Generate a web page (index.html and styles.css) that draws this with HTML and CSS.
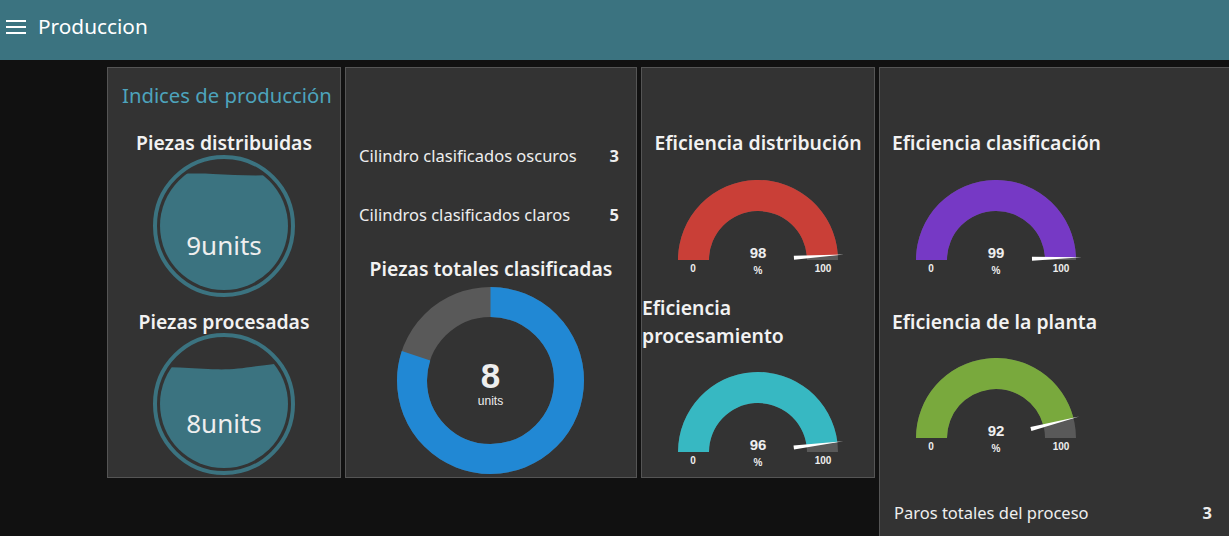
FILE: index.html
```html
<!DOCTYPE html>
<html lang="es">
<head>
<meta charset="utf-8">
<title>Produccion</title>
<link rel="stylesheet" href="styles.css">
</head>
<body>
<header class="toolbar">
  <svg class="menu-icon" width="20" height="14" viewBox="0 0 20 14"><rect x="0" y="0" width="20" height="2" fill="#fff"/><rect x="0" y="6" width="20" height="2" fill="#fff"/><rect x="0" y="12" width="20" height="2" fill="#fff"/></svg>
  <span class="toolbar-title">Produccion</span>
</header>
<main class="board">
  <section class="card card-a">
    <div class="group-title">Indices de producción</div>
    <div class="w-label first">Piezas distribuidas</div>
    <svg class="liquid" width="142" height="142" viewBox="0 0 142 142">
      <defs><clipPath id="c1"><circle cx="71" cy="71" r="64"/></clipPath></defs>
      <circle cx="71" cy="71" r="69" fill="none" stroke="#3b7380" stroke-width="4"/>
      <g clip-path="url(#c1)">
        <path d="M0 21 C20 19 40 18 60 19 S100 21 120 20 S140 18 142 18 L142 142 L0 142 Z" fill="#3b7380"/>
      </g>
      <text x="71" y="100" class="liquid-text">9units</text>
    </svg>
    <div class="w-label second">Piezas procesadas</div>
    <svg class="liquid" width="142" height="142" viewBox="0 0 142 142">
      <defs><clipPath id="c2"><circle cx="71" cy="71" r="64"/></clipPath></defs>
      <circle cx="71" cy="71" r="69" fill="none" stroke="#3b7380" stroke-width="4"/>
      <g clip-path="url(#c2)">
        <path d="M0 35 C20 33 35 35 55 36 S85 36 105 33 S135 30 142 31 L142 142 L0 142 Z" fill="#3b7380"/>
      </g>
      <text x="71" y="100" class="liquid-text">8units</text>
    </svg>
  </section>

  <section class="card card-b">
    <div class="text-row r1"><span>Cilindro clasificados oscuros</span><b>3</b></div>
    <div class="text-row r2"><span>Cilindros clasificados claros</span><b>5</b></div>
    <div class="w-label donut-label">Piezas totales clasificadas</div>
    <svg class="donut" width="187" height="187" viewBox="0 0 187 187">
      <circle cx="93.5" cy="93.5" r="78.5" fill="none" stroke="#595959" stroke-width="30"/>
      <circle cx="93.5" cy="93.5" r="78.5" fill="none" stroke="#2188d4" stroke-width="30" stroke-dasharray="394.6 493.3" transform="rotate(-90 93.5 93.5)"/>
      <text x="93.5" y="101" class="donut-num">8</text>
      <text x="93.5" y="118" class="donut-unit">units</text>
    </svg>
  </section>

  <section class="card card-c">
    <div class="w-label g-title1">Eficiencia distribución</div>
    <svg class="gauge" width="200" height="100" viewBox="0 0 200 100">
      <path d="M20 80 A80 80 0 0 1 180 80 L149 80 A49 49 0 0 0 51 80 Z" fill="#595959"/>
      <path d="M20 80 A80 80 0 0 1 179.842 74.977 L148.903 76.923 A49 49 0 0 0 51 80 Z" fill="#c93f37"/>
      <polygon points="136.05,79.74 135.80,75.74 185.83,74.60" fill="#fff"/>
      <text x="100" y="78" class="g-val">98</text>
      <text x="100" y="94" class="g-unit">%</text>
      <text x="35" y="92" class="g-lim">0</text>
      <text x="165" y="92" class="g-lim">100</text>
    </svg>
    <div class="w-label g-title-wrap">Eficiencia procesamiento</div>
    <svg class="gauge g2" width="200" height="100" viewBox="0 0 200 100">
      <path d="M20 80 A80 80 0 0 1 180 80 L149 80 A49 49 0 0 0 51 80 Z" fill="#595959"/>
      <path d="M20 80 A80 80 0 0 1 179.369 69.973 L148.614 73.859 A49 49 0 0 0 51 80 Z" fill="#37b8c2"/>
      <polygon points="135.97,77.47 135.47,73.50 185.32,69.22" fill="#fff"/>
      <text x="100" y="78" class="g-val">96</text>
      <text x="100" y="94" class="g-unit">%</text>
      <text x="35" y="92" class="g-lim">0</text>
      <text x="165" y="92" class="g-lim">100</text>
    </svg>
  </section>

  <section class="card card-d">
    <div class="w-label left g-title1">Eficiencia clasificación</div>
    <svg class="gauge left-g" width="200" height="100" viewBox="0 0 200 100">
      <path d="M20 80 A80 80 0 0 1 180 80 L149 80 A49 49 0 0 0 51 80 Z" fill="#595959"/>
      <path d="M20 80 A80 80 0 0 1 179.961 77.487 L148.976 78.461 A49 49 0 0 0 51 80 Z" fill="#7639c5"/>
      <polygon points="136.05,80.87 135.92,76.87 185.96,77.30" fill="#fff"/>
      <text x="100" y="78" class="g-val">99</text>
      <text x="100" y="94" class="g-unit">%</text>
      <text x="35" y="92" class="g-lim">0</text>
      <text x="165" y="92" class="g-lim">100</text>
    </svg>
    <div class="w-label left g-title3">Eficiencia de la planta</div>
    <svg class="gauge left-g g4" width="200" height="100" viewBox="0 0 200 100">
      <path d="M20 80 A80 80 0 0 1 180 80 L149 80 A49 49 0 0 0 51 80 Z" fill="#595959"/>
      <path d="M20 80 A80 80 0 0 1 177.487 60.105 L147.461 67.814 A49 49 0 0 0 51 80 Z" fill="#79a93d"/>
      <polygon points="135.37,72.98 134.37,69.11 183.30,58.61" fill="#fff"/>
      <text x="100" y="78" class="g-val">92</text>
      <text x="100" y="94" class="g-unit">%</text>
      <text x="35" y="92" class="g-lim">0</text>
      <text x="165" y="92" class="g-lim">100</text>
    </svg>
    <div class="text-row r-last"><span>Paros totales del proceso</span><b>3</b></div>
  </section>
</main>
</body>
</html>
```

FILE: styles.css
```css
html, body {
  margin: 0;
  padding: 0;
}
body {
  background: #111111;
  color: #eeeeee;
  font-family: "Noto Sans", "Open Sans", sans-serif;
  width: 1229px;
  height: 536px;
  overflow: hidden;
}
.toolbar {
  height: 60px;
  background: #3b7380;
  display: flex;
  align-items: center;
  padding-left: 6px;
  box-sizing: border-box;
}
.menu-icon {
  display: block;
  margin-right: 12px;
  margin-top: -6px;
}
.toolbar-title {
  font-size: 20.8px;
  color: #fff;
  margin-top: -8px;
}
.board {
  display: flex;
  align-items: flex-start;
  gap: 4px;
  padding: 7px 0 0 107px;
}
.card {
  background: #333333;
  border: 1px solid #555555;
  box-sizing: border-box;
  display: flex;
  flex-direction: column;
  flex-shrink: 0;
}
.card-a { width: 234px; height: 411px; align-items: center; }
.card-b { width: 292px; height: 411px; }
.card-c { width: 234px; height: 411px; }
.card-d { width: 352px; height: 490px; }

.group-title {
  align-self: stretch;
  margin-top: 10px;
  padding-left: 14px;
  line-height: 34px;
  font-size: 20.3px;
  color: #4da3bc;
  white-space: nowrap;
}
.w-label {
  font-size: 19.4px;
  font-weight: 600;
  text-align: center;
  color: #f2f2f2;
  white-space: nowrap;
}
.w-label.first { line-height: 24px; margin-top: 19px; }
.w-label.second { line-height: 22px; margin-top: 14px; }
.liquid { display: block; }
.liquid-text {
  font-size: 26px;
  fill: #eeeeee;
  text-anchor: middle;
  font-family: "Noto Sans", sans-serif;
}

.text-row {
  display: flex;
  justify-content: space-between;
  align-items: center;
  height: 36px;
  padding: 0 17px 0 13px;
  font-size: 16.5px;
  color: #eeeeee;
}
.text-row b { font-weight: 700; }
.r1 { margin-top: 69px; }
.r2 { margin-top: 23px; }
.donut-label { line-height: 26px; margin-top: 24px; }
.donut { display: block; margin: 5px auto 0; position: relative; left: -1px; }
.donut-num {
  font-family: "Liberation Sans", Arial, sans-serif;
  font-weight: 700;
  font-size: 35px;
  fill: #eeeeee;
  text-anchor: middle;
}
.donut-unit {
  font-family: "Liberation Sans", Arial, sans-serif;
  font-size: 12px;
  fill: #eeeeee;
  text-anchor: middle;
}

.g-title1 { line-height: 26px; margin-top: 62px; }
.gauge { display: block; margin: 24px auto 0; }
.g-title-wrap {
  white-space: normal;
  text-align: left;
  width: 190px;
  line-height: 28px;
  margin-top: 14px;
}
.gauge.g2 { margin-top: 22px; }
.g-val {
  font-family: "Liberation Sans", Arial, sans-serif;
  font-weight: 700;
  font-size: 15px;
  fill: #eeeeee;
  text-anchor: middle;
}
.g-unit, .g-lim {
  font-family: "Liberation Sans", Arial, sans-serif;
  font-weight: 700;
  font-size: 10px;
  fill: #eeeeee;
  text-anchor: middle;
}
.w-label.left { text-align: left; padding-left: 12px; }
.gauge.left-g { margin-left: 16px; }
.g-title3 { line-height: 26px; margin-top: 29px; }
.gauge.g4 { margin-top: 23px; }
.r-last { margin-top: 36px; padding: 0 18px 0 14px; }
```
